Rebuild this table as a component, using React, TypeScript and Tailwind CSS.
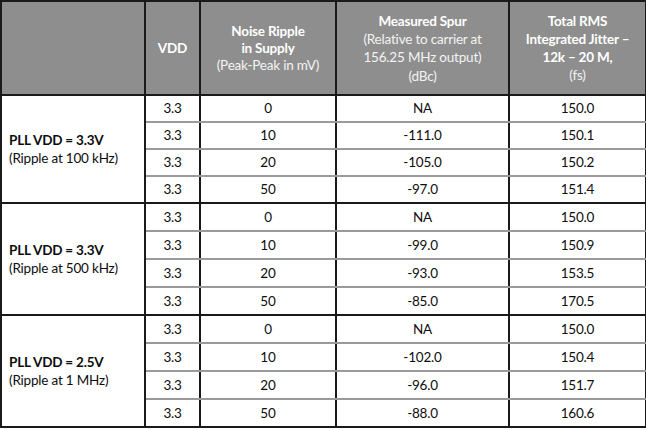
import React from "react";

type Row = { vdd: string; ripple: string; spur: string; jitter: string };
type Group = { title: string; sub: string; rows: Row[]; h: string };

const groups: Group[] = [
  {
    title: "PLL VDD = 3.3V",
    sub: "(Ripple at 100 kHz)",
    h: "h-[27px]",
    rows: [
      { vdd: "3.3", ripple: "0", spur: "NA", jitter: "150.0" },
      { vdd: "3.3", ripple: "10", spur: "-111.0", jitter: "150.1" },
      { vdd: "3.3", ripple: "20", spur: "-105.0", jitter: "150.2" },
      { vdd: "3.3", ripple: "50", spur: "-97.0", jitter: "151.4" },
    ],
  },
  {
    title: "PLL VDD = 3.3V",
    sub: "(Ripple at 500 kHz)",
    h: "h-[28px]",
    rows: [
      { vdd: "3.3", ripple: "0", spur: "NA", jitter: "150.0" },
      { vdd: "3.3", ripple: "10", spur: "-99.0", jitter: "150.9" },
      { vdd: "3.3", ripple: "20", spur: "-93.0", jitter: "153.5" },
      { vdd: "3.3", ripple: "50", spur: "-85.0", jitter: "170.5" },
    ],
  },
  {
    title: "PLL VDD = 2.5V",
    sub: "(Ripple at 1 MHz)",
    h: "h-[28px]",
    rows: [
      { vdd: "3.3", ripple: "0", spur: "NA", jitter: "150.0" },
      { vdd: "3.3", ripple: "10", spur: "-102.0", jitter: "150.4" },
      { vdd: "3.3", ripple: "20", spur: "-96.0", jitter: "151.7" },
      { vdd: "3.3", ripple: "50", spur: "-88.0", jitter: "160.6" },
    ],
  },
];

export default function App() {
  return (
    <div
      className="w-[646px] h-[430px] bg-white overflow-hidden"
      style={{ fontFamily: "Lato, 'Liberation Sans', sans-serif" }}
    >
      <table className="w-[645px] table-fixed border-collapse border-2 border-[#1a1a1a] text-[13.5px] tracking-[-0.2px] text-[#0d0d0d]">
        <colgroup>
          <col className="w-[144px]" />
          <col className="w-[55px]" />
          <col className="w-[136px]" />
          <col className="w-[173px]" />
          <col className="w-[137px]" />
        </colgroup>
        <thead>
          <tr className="h-[94px] bg-[#8e8e8e] text-white leading-[18px]">
            <th className="border-2 border-[#1a1a1a]"></th>
            <th className="border-2 border-[#1a1a1a] font-bold">VDD</th>
            <th className="border-2 border-[#1a1a1a] font-bold leading-[17px]">
              Noise Ripple
              <br />
              in Supply
              <br />
              <span className="font-normal text-[#f3f3f3]">(Peak-Peak in mV)</span>
            </th>
            <th className="border-2 border-[#1a1a1a] font-bold">
              Measured Spur
              <br />
              <span className="font-normal text-[#f3f3f3]">
                (Relative to carrier at
                <br />
                156.25 MHz output)
              </span>
              <div className="font-normal text-[#f3f3f3] mt-[1px]">(dBc)</div>
            </th>
            <th className="border-2 border-[#1a1a1a] font-bold">
              Total RMS
              <br />
              Integrated Jitter –
              <br />
              12k – 20 M,
              <br />
              <span className="font-normal text-[#f3f3f3]">(fs)</span>
            </th>
          </tr>
        </thead>
        <tbody>
          {groups.map((g, gi) =>
            g.rows.map((r, ri) => {
              const last = ri === g.rows.length - 1;
              const rowBorder = last
                ? "border-b-2 border-b-[#1a1a1a]"
                : "border-b-2 border-b-[#9a9a9a]";
              return (
                <tr key={`${gi}-${ri}`} className={`${g.h} text-center`}>
                  {ri === 0 && (
                    <td
                      rowSpan={g.rows.length}
                      className="border-2 border-[#1a1a1a] text-left align-middle pl-[7px] leading-[18px]"
                    >
                      <div className="font-bold">{g.title}</div>
                      <div>{g.sub}</div>
                    </td>
                  )}
                  <td className={`border-x-2 border-x-[#1a1a1a] ${rowBorder}`}>{r.vdd}</td>
                  <td className={`border-x-2 border-x-[#1a1a1a] ${rowBorder}`}>{r.ripple}</td>
                  <td className={`border-x-2 border-x-[#1a1a1a] ${rowBorder}`}>{r.spur}</td>
                  <td className={`border-x-2 border-x-[#1a1a1a] ${rowBorder}`}>{r.jitter}</td>
                </tr>
              );
            })
          )}
        </tbody>
      </table>
    </div>
  );
}
